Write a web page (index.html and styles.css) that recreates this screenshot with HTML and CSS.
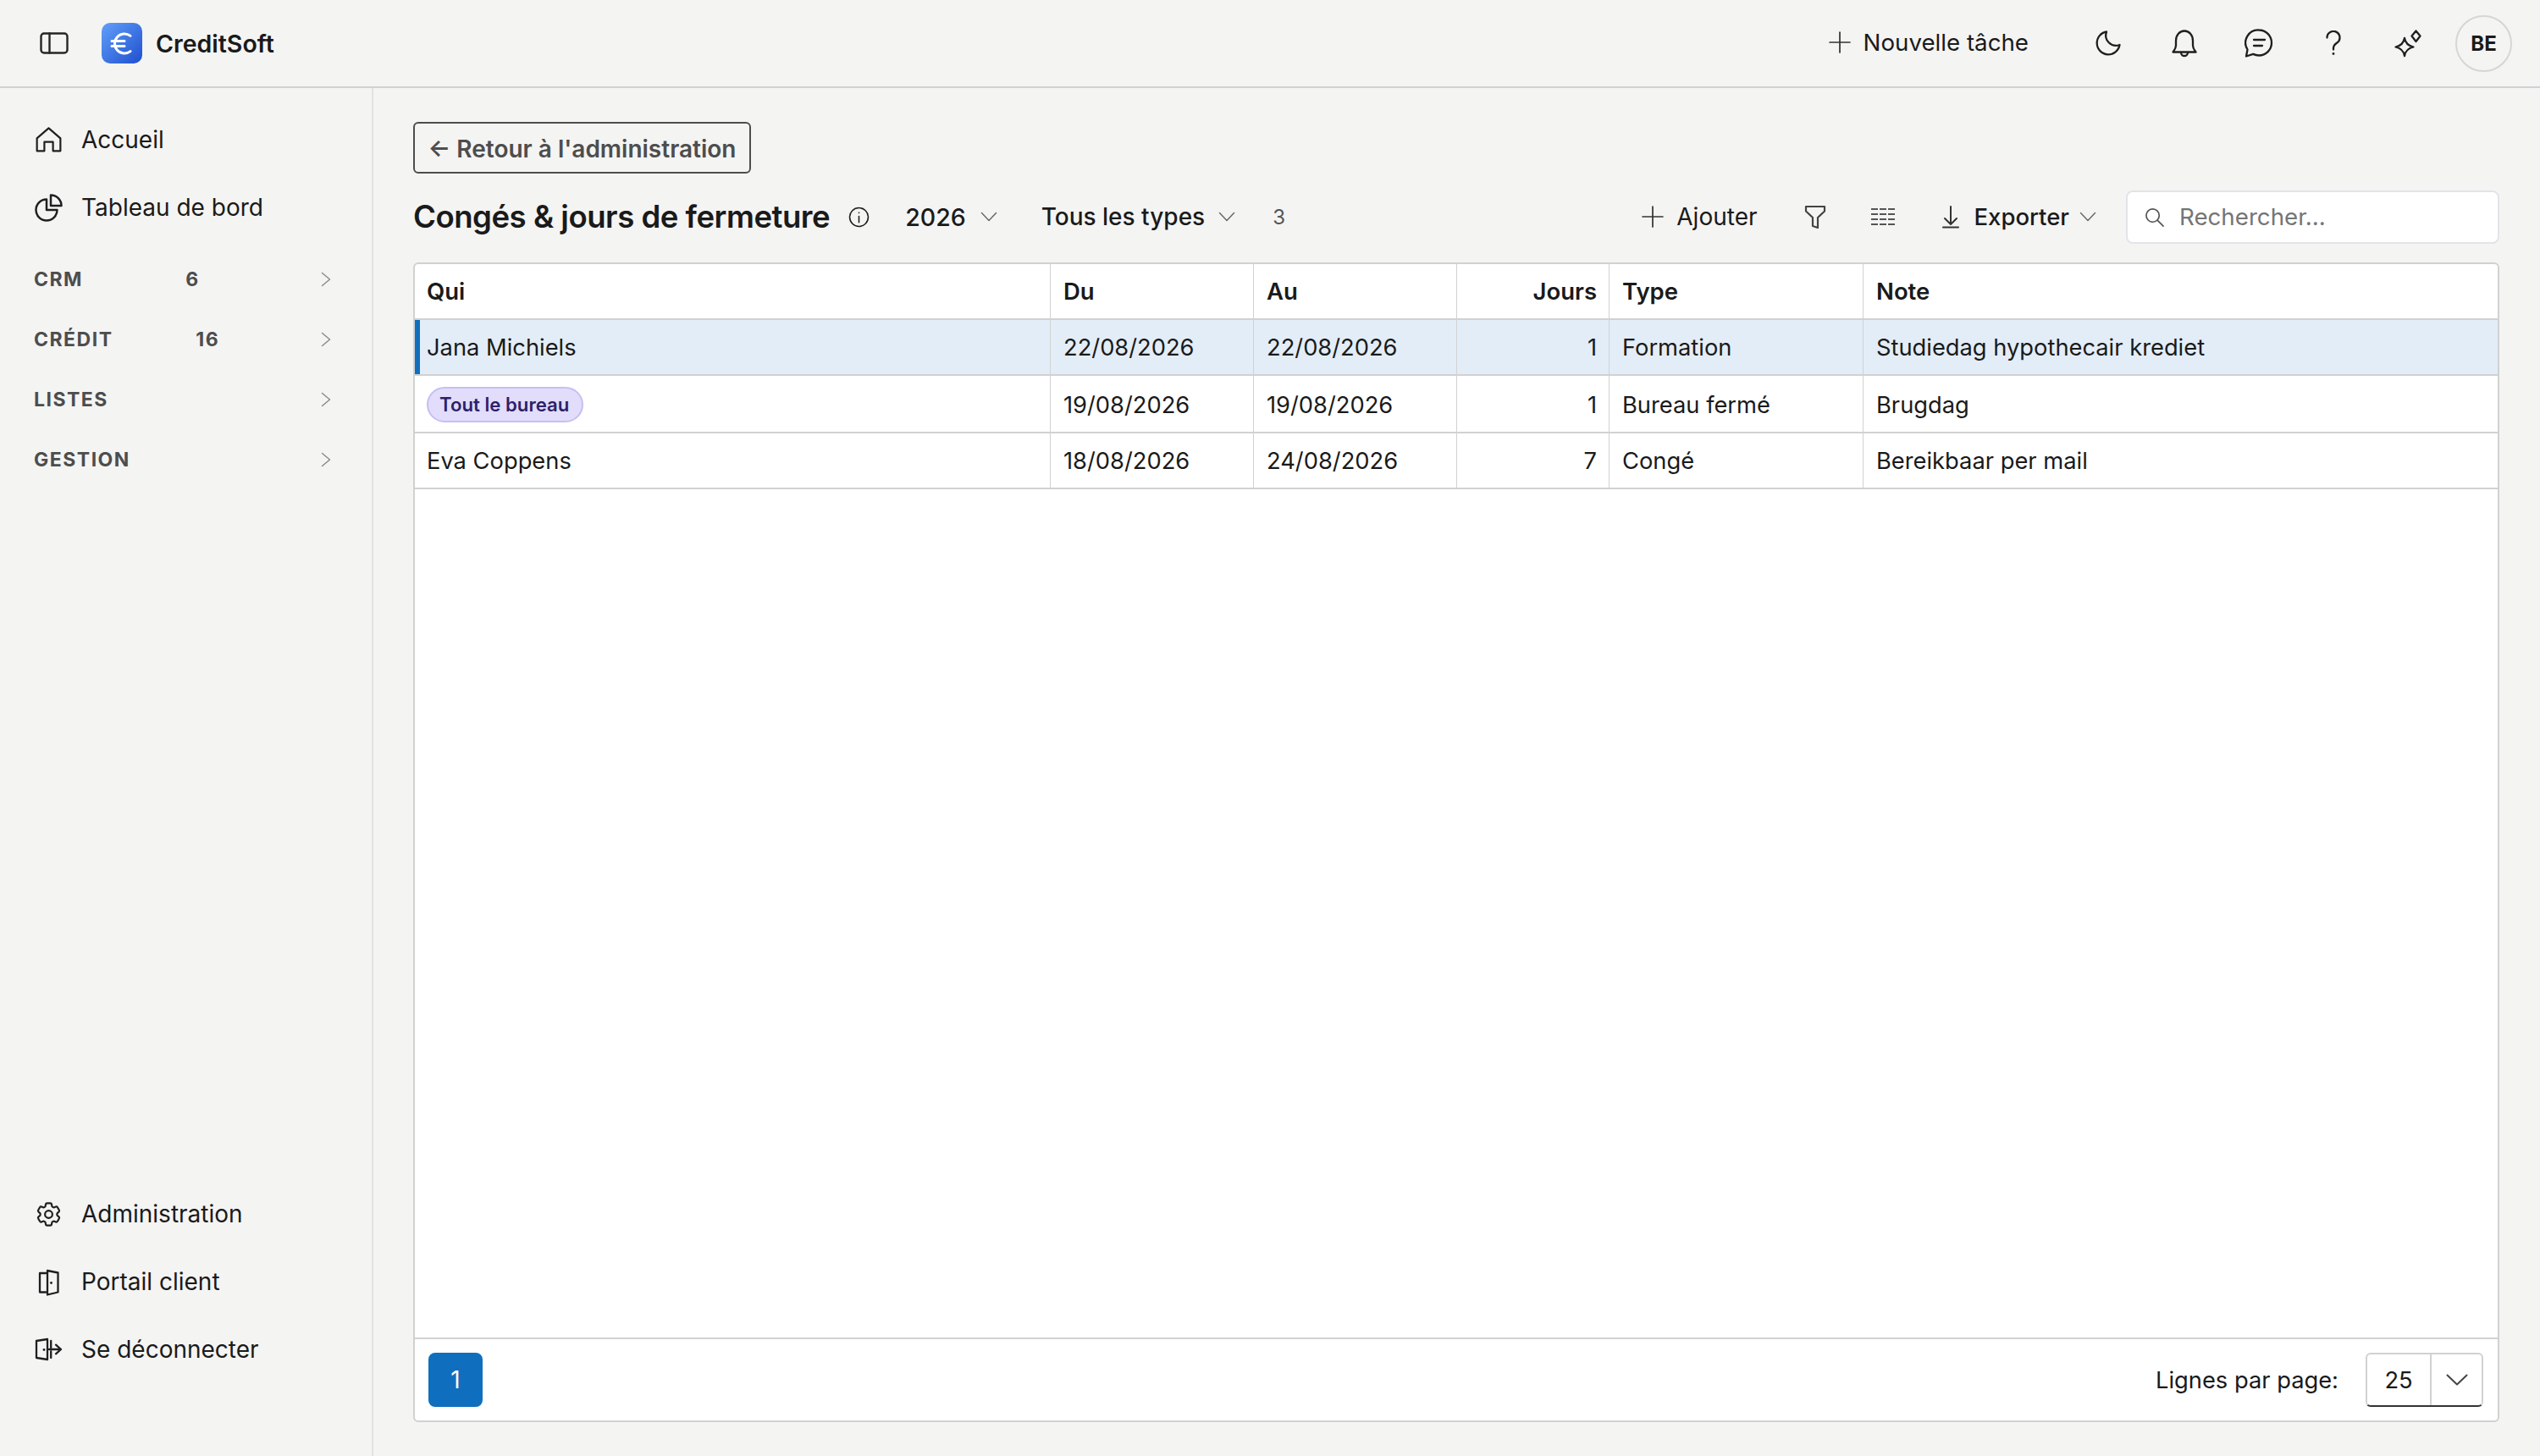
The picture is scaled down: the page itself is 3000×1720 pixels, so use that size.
FILE: index.html
```html
<!DOCTYPE html>
<html lang="fr">
<head>
    <meta charset="UTF-8">
    <title>CreditSoft</title>
    <link rel="stylesheet" href="styles.css">
</head>
<body>
    <header class="topbar">
        <div class="topbar-left">
            <svg class="icon toggle-icon" viewBox="0 0 34 26"><rect x="1.500" y="1.500" width="31" height="23" rx="3.500"/><path d="M11.500 1.500v23"/></svg>
            <div class="logo">
                <svg viewBox="0 0 48 48"><path d="M34 15.400A11.500 11.500 0 1 0 34 33.600M12 21.500h15M12 27.500h15"/></svg>
            </div>
            <span class="brand">CreditSoft</span>
        </div>
        <div class="topbar-right">
            <button class="new-task">
                <svg class="icon plus-icon" viewBox="0 0 24 24"><path d="M12 1v22M1 12h22"/></svg>
                Nouvelle tâche
            </button>
            <div class="topbar-icons">
                <span class="top-slot moon-slot"><svg class="icon moon-icon" viewBox="0 0 30 30"><path d="M13 1.500A13.500 13.500 0 1 0 28.500 17 12 12 0 0 1 13 1.500Z"/></svg></span>
                <span class="top-slot"><svg class="icon bell-icon" viewBox="0 0 30 33"><path d="M1.500 26.500c1.500-2 3.500-4 3.500-8V13a10 11.500 0 0 1 20 0v5.500c0 4 2 6 3.500 8ZM11 27a4 4 0 0 0 8 0"/></svg></span>
                <span class="top-slot"><svg class="icon chat-icon" viewBox="0 0 34 34"><path d="M17 1.500a15 15 0 0 1 0 30c-2.500 0-4.800-.6-6.800-1.600L2 32.500l1.500-8A15 15 0 0 1 17 1.500ZM11 13h13M11 20h10"/></svg></span>
                <span class="top-slot"><svg class="icon help-icon" viewBox="0 0 18 30"><path d="M1.500 8.500a7.500 7.500 0 1 1 11.500 6.300c-2.500 1.700-4 3-4 6.200v1.500"/><circle class="dot" cx="9" cy="27.500" r="1.400"/></svg></span>
                <span class="top-slot"><svg class="icon spark-icon" viewBox="0 0 34 34"><path d="M13 11c1 6 4 9 10.500 10.500C17 23 14 26 13 32c-1-6-4-9-10.500-10.500C9 20 12 17 13 11ZM26.500 2.500l5 6-5 6.500-5-6.500Z"/></svg></span>
            </div>
            <div class="avatar">BE</div>
        </div>
    </header>

    <div class="layout">
        <aside class="sidebar">
            <nav class="nav-top">
                <a class="nav-item">
                    <svg class="icon nav-icon" viewBox="0 0 24 24"><path d="M2.500 20.800V10.500L12 2.300l9.500 8.200v10.300h-6v-7.300h-7v7.300Z"/></svg>
                    Accueil
                </a>
                <a class="nav-item">
                    <svg class="icon nav-icon" viewBox="1.500 1.500 21 21"><path d="M10.500 6a7.500 7.500 0 1 0 7.500 7.500h-7.500V6Z"/><path d="M13.500 10.500H21A7.500 7.500 0 0 0 13.500 3v7.500Z"/></svg>
                    Tableau de bord
                </a>
                <div class="nav-groups">
                    <div class="nav-group">
                        <span class="group-label">CRM</span>
                        <span class="group-count">6</span>
                        <span class="group-chevron"><svg class="icon chevron-right" viewBox="0 0 12 18"><path d="M1.500 1.500 10.500 9l-9 7.500"/></svg></span>
                    </div>
                    <div class="nav-group">
                        <span class="group-label">CRÉDIT</span>
                        <span class="group-count">16</span>
                        <span class="group-chevron"><svg class="icon chevron-right" viewBox="0 0 12 18"><path d="M1.500 1.500 10.500 9l-9 7.500"/></svg></span>
                    </div>
                    <div class="nav-group">
                        <span class="group-label">LISTES</span>
                        <span class="group-chevron"><svg class="icon chevron-right" viewBox="0 0 12 18"><path d="M1.500 1.500 10.500 9l-9 7.500"/></svg></span>
                    </div>
                    <div class="nav-group">
                        <span class="group-label">GESTION</span>
                        <span class="group-chevron"><svg class="icon chevron-right" viewBox="0 0 12 18"><path d="M1.500 1.500 10.500 9l-9 7.500"/></svg></span>
                    </div>
                </div>
            </nav>
            <nav class="nav-bottom">
                <a class="nav-item">
                    <svg class="icon nav-icon" viewBox="0 0 24 24"><path d="M9.594 3.940c.09-.542.56-.94 1.110-.94h2.593c.55 0 1.020.398 1.110.94l.213 1.281c.063.374.313.686.645.870.074.040.147.083.22.127.325.196.72.257 1.075.124l1.217-.456a1.125 1.125 0 0 1 1.370.490l1.296 2.247a1.125 1.125 0 0 1-.26 1.431l-1.003.827c-.293.241-.438.613-.43.992a7.723 7.723 0 0 1 0 .255c-.008.378.137.75.43.991l1.004.827c.424.35.534.955.26 1.430l-1.298 2.247a1.125 1.125 0 0 1-1.369.491l-1.217-.456c-.355-.133-.75-.072-1.076.124a6.470 6.470 0 0 1-.22.128c-.331.183-.581.495-.644.869l-.213 1.281c-.09.543-.56.94-1.110.94h-2.594c-.55 0-1.019-.398-1.110-.94l-.213-1.281c-.062-.374-.312-.686-.644-.870a6.520 6.520 0 0 1-.22-.127c-.325-.196-.72-.257-1.076-.124l-1.217.456a1.125 1.125 0 0 1-1.369-.49l-1.297-2.247a1.125 1.125 0 0 1 .26-1.431l1.004-.827c.292-.24.437-.613.43-.991a6.932 6.932 0 0 1 0-.255c.007-.38-.138-.751-.43-.992l-1.004-.827a1.125 1.125 0 0 1-.26-1.430l1.297-2.247a1.125 1.125 0 0 1 1.370-.491l1.216.456c.356.133.751.072 1.076-.124.072-.044.146-.086.22-.128.332-.183.582-.495.644-.869l.214-1.280Z"/><circle cx="12" cy="12" r="3"/></svg>
                    Administration
                </a>
                <a class="nav-item">
                    <svg class="icon door-icon" viewBox="0 0 35 35"><path d="M14 7H7v22.500h7M16 4l12.500 2.500v23L16 32.500Z"/><circle class="dot" cx="20.500" cy="18.500" r="1.400"/></svg>
                    Portail client
                </a>
                <a class="nav-item">
                    <svg class="icon door-icon" viewBox="0 0 35 35"><path d="M16 5 3 7v20l13 2ZM20.200 7v8M20.200 19.500v7.500M18 17h14M26 11.700 32 17l-6 5.300"/><circle class="dot" cx="12" cy="17.500" r="1.400"/></svg>
                    Se déconnecter
                </a>
            </nav>
        </aside>

        <main class="content">
            <button class="back-button">← Retour à l'administration</button>

            <div class="toolbar">
                <div class="toolbar-left">
                    <h1>Congés &amp; jours de fermeture</h1>
                    <svg class="icon info-icon" viewBox="0 0 24 24"><circle cx="12" cy="12" r="10.500"/><path d="M12 11v7"/><circle class="dot" cx="12" cy="7" r=".8"/></svg>
                    <div class="select-year">2026 <svg class="icon chevron-down" viewBox="0 0 20 12"><path d="m1.500 1.500 8.500 9 8.500-9"/></svg></div>
                    <div class="select-type">Tous les types <svg class="icon chevron-down" viewBox="0 0 20 12"><path d="m1.500 1.500 8.500 9 8.500-9"/></svg></div>
                    <span class="result-count">3</span>
                </div>
                <div class="toolbar-right">
                    <div class="tool-add">
                        <svg class="icon plus-icon" viewBox="0 0 24 24"><path d="M12 1v22M1 12h22"/></svg>
                        Ajouter
                    </div>
                    <svg class="icon filter-icon" viewBox="0 0 26 28"><path d="M2 2h22v5.500L16 15v12l-6-2V15L2 7.500Z"/></svg>
                    <svg class="icon columns-icon" viewBox="0 0 28 22"><path d="M0 2h28M0 8h28M0 14h28M0 20h28"/></svg>
                    <div class="tool-export">
                        <svg class="icon export-icon" viewBox="0 0 20 27"><path d="M10 1v21M3 15l7 7 7-7M1 25.500h18"/></svg>
                        Exporter
                        <svg class="icon chevron-down" viewBox="0 0 20 12"><path d="m1.500 1.500 8.500 9 8.500-9"/></svg>
                    </div>
                    <div class="search-box">
                        <svg class="icon search-icon" viewBox="0 0 24 24"><circle cx="10" cy="10" r="8"/><path d="m16 16 7 7"/></svg>
                        <span>Rechercher...</span>
                    </div>
                </div>
            </div>

            <section class="table-card">
                <table class="data-table">
                    <colgroup>
                        <col class="col-who"><col class="col-date"><col class="col-date"><col class="col-days"><col class="col-type"><col>
                    </colgroup>
                    <thead>
                        <tr><th>Qui</th><th>Du</th><th>Au</th><th class="num">Jours</th><th>Type</th><th>Note</th></tr>
                    </thead>
                    <tbody>
                        <tr class="selected">
                            <td>Jana Michiels</td><td>22/08/2026</td><td>22/08/2026</td><td class="num">1</td><td>Formation</td><td>Studiedag hypothecair krediet</td>
                        </tr>
                        <tr class="tall">
                            <td><span class="pill">Tout le bureau</span></td><td>19/08/2026</td><td>19/08/2026</td><td class="num">1</td><td>Bureau fermé</td><td>Brugdag</td>
                        </tr>
                        <tr>
                            <td>Eva Coppens</td><td>18/08/2026</td><td>24/08/2026</td><td class="num">7</td><td>Congé</td><td>Bereikbaar per mail</td>
                        </tr>
                    </tbody>
                </table>
                <div class="table-footer">
                    <button class="page-button">1</button>
                    <div class="page-size">
                        <span>Lignes par page:</span>
                        <div class="size-select">
                            <span class="size-value">25</span>
                            <span class="size-arrow"><svg class="icon chevron-size" viewBox="0 0 26 14"><path d="m1.500 1.500 11.500 11 11.500-11"/></svg></span>
                        </div>
                    </div>
                </div>
            </section>
        </main>
    </div>
</body>
</html>
```

FILE: styles.css
```css
* {
    box-sizing: border-box;
}

body {
    margin: 0;
    height: 1720px;
    display: flex;
    flex-direction: column;
    font-family: Inter, "Liberation Sans", sans-serif;
    font-size: 27.300px;
    color: #1a1a1a;
    background-color: #f4f4f3;
}

button {
    font-family: inherit;
    color: inherit;
    background: none;
    border: none;
    padding: 0;
}

.icon {
    display: block;
    flex: none;
    fill: none;
    stroke: #1f1f1f;
    stroke-width: 2.300;
    stroke-linecap: round;
    stroke-linejoin: round;
}

.icon .dot {
    fill: #1f1f1f;
    stroke: none;
}

.topbar {
    height: 104px;
    flex: none;
    display: flex;
    align-items: center;
    justify-content: space-between;
    padding: 0 33px 0 47px;
    border-bottom: 2px solid #d1d1d1;
}

.topbar-left,
.topbar-right {
    display: flex;
    align-items: center;
}

.toggle-icon {
    width: 34px;
    height: 26px;
    margin-right: 39px;
    stroke: #262626;
    stroke-width: 2.400;
}

.logo {
    width: 48px;
    height: 48px;
    border-radius: 10px;
    background: linear-gradient(135deg, #619ff9, #1f4fcf);
    margin-right: 16px;
}

.logo svg {
    display: block;
    width: 48px;
    height: 48px;
    fill: none;
    stroke: #fff;
    stroke-width: 3;
    stroke-linecap: round;
}

.brand {
    font-size: 28.500px;
    font-weight: 600;
}

.new-task {
    display: flex;
    align-items: center;
    gap: 15px;
    font-size: 27.700px;
    margin-right: 50px;
    padding-bottom: 3px;
}

.plus-icon {
    width: 26px;
    height: 26px;
    stroke: #333;
    stroke-width: 1.600;
}

.topbar-icons {
    display: flex;
    align-items: center;
    margin-right: 12px;
}

.top-slot {
    width: 88px;
    display: flex;
    justify-content: center;
}

.moon-slot {
    margin-right: 2px;
}

.moon-icon {
    width: 30px;
    height: 30px;
}

.bell-icon {
    width: 30px;
    height: 33px;
}

.chat-icon,
.spark-icon {
    width: 34px;
    height: 34px;
}

.help-icon {
    width: 18px;
    height: 30px;
}

.avatar {
    width: 67px;
    height: 67px;
    border-radius: 50%;
    border: 2px solid #d6d6d6;
    display: flex;
    align-items: center;
    justify-content: center;
    font-size: 24px;
    font-weight: 700;
}

.layout {
    flex: 1;
    display: flex;
    min-height: 0;
}

.sidebar {
    width: 441px;
    flex: none;
    display: flex;
    flex-direction: column;
    justify-content: space-between;
    padding: 21px 0 86px 40px;
    border-right: 2px solid #e2e2e4;
}

.nav-item {
    height: 80px;
    display: flex;
    align-items: center;
    gap: 21px;
    font-size: 28px;
}

.nav-icon {
    width: 35px;
    height: 35px;
    stroke-width: 1.500;
}

.door-icon {
    width: 35px;
    height: 35px;
}

.nav-groups {
    margin-top: 9px;
}

.nav-group {
    width: 373px;
    height: 71px;
    display: flex;
    align-items: center;
    justify-content: space-between;
    font-size: 23px;
    font-weight: 700;
    letter-spacing: 1.500px;
    color: #4d4d4d;
}

.group-chevron {
    width: 56px;
    display: flex;
    justify-content: center;
}

.chevron-right {
    width: 12px;
    height: 18px;
    stroke: #8a8a8a;
    stroke-width: 1.500;
}

.content {
    flex: 1;
    min-width: 0;
    display: flex;
    flex-direction: column;
    align-items: flex-start;
    padding: 40px 48px 40px 47px;
}

.back-button {
    height: 61px;
    width: 399px;
    padding-top: 2px;
    border: 2px solid #4d4d4d;
    border-radius: 6px;
    font-size: 28px;
    font-weight: 600;
    color: #4d4d4d;
}

.toolbar {
    width: 100%;
    height: 64px;
    margin-top: 19px;
    display: flex;
    align-items: center;
    justify-content: space-between;
}

.toolbar-left,
.toolbar-right,
.select-year,
.select-type,
.tool-add,
.tool-export {
    display: flex;
    align-items: center;
}

h1 {
    margin: 0 22px 0 0;
    font-size: 36.600px;
    font-weight: 600;
    letter-spacing: -0.500px;
}

.info-icon {
    width: 25px;
    height: 25px;
    margin-right: 42px;
    stroke-width: 1.500;
}

.select-year {
    gap: 17px;
    font-weight: 500;
    font-size: 28.500px;
    margin-right: 52px;
}

.select-type {
    gap: 16px;
    font-size: 28px;
    font-weight: 500;
    margin-right: 44px;
}

.chevron-down {
    width: 20px;
    height: 12px;
    stroke: #6a6a6a;
    stroke-width: 1.500;
}

.result-count {
    font-size: 24px;
    color: #555;
}

.tool-add {
    gap: 15px;
    font-size: 28px;
    margin-right: 55px;
}

.filter-icon {
    width: 26px;
    height: 28px;
    margin-right: 53px;
    stroke: #444;
    stroke-width: 2.200;
}

.columns-icon {
    width: 28px;
    height: 22px;
    margin-right: 56px;
    stroke: #555;
    stroke-width: 2;
    stroke-linecap: butt;
    stroke-dasharray: 8 2;
}

.tool-export {
    font-size: 27.500px;
    font-weight: 500;
    margin-right: 35px;
}

.export-icon {
    width: 20px;
    height: 27px;
    margin-right: 18px;
    stroke: #333;
    stroke-width: 2;
}

.tool-export .chevron-down {
    margin-left: 12px;
}

.search-box {
    width: 441px;
    height: 63px;
    display: flex;
    align-items: center;
    gap: 18px;
    padding-left: 20px;
    background-color: #fff;
    border: 2px solid #e2e4e8;
    border-radius: 8px;
    color: #757575;
    font-size: 27.700px;
}

.search-icon {
    width: 23px;
    height: 23px;
    stroke: #555;
    stroke-width: 1.800;
}

.table-card {
    flex: 1;
    width: 100%;
    margin-top: 22px;
    display: flex;
    flex-direction: column;
    justify-content: space-between;
    background-color: #fff;
    border: 2px solid #d1d1d1;
    border-radius: 6px;
}

.data-table {
    width: 100%;
    table-layout: fixed;
    border-collapse: separate;
    border-spacing: 0;
}

.col-who {
    width: 751px;
}

.col-date {
    width: 240px;
}

.col-days {
    width: 180px;
}

.col-type {
    width: 300px;
}

.data-table th,
.data-table td {
    height: 66px;
    padding: 0 14px 0 15px;
    text-align: left;
    border-bottom: 2px solid #d1d1d1;
    border-right: 1px solid #d1d1d1;
}

.data-table th:first-child,
.data-table td:first-child {
    padding-left: 14px;
}

.data-table th:last-child,
.data-table td:last-child {
    border-right: none;
}

.data-table th {
    font-size: 27.500px;
    font-weight: 600;
}

.data-table .num {
    text-align: right;
}

.data-table .tall td {
    height: 68px;
    padding-top: 2px;
}

.selected td {
    background-color: #e3edf8;
}

.selected td:first-child {
    box-shadow: inset 6px 0 0 #106ebe;
}

.pill {
    display: inline-block;
    height: 42px;
    line-height: 38px;
    vertical-align: middle;
    padding: 0 15px 0 13px;
    border: 2px solid #c6bff3;
    border-radius: 21px;
    background-color: #e1ddfb;
    color: #2e1f6b;
    font-size: 22.200px;
    font-weight: 600;
}

.table-footer {
    height: 98px;
    display: flex;
    align-items: center;
    justify-content: space-between;
    padding: 0 17px 0 16px;
    border-top: 2px solid #d1d1d1;
}

.page-button {
    width: 64px;
    height: 64px;
    border-radius: 8px;
    background-color: #106ebe;
    color: #fff;
    font-size: 28px;
}

.page-size {
    display: flex;
    align-items: center;
    gap: 32px;
}

.size-select {
    width: 139px;
    height: 64px;
    display: flex;
    border: 2px solid #d1d1d1;
    border-bottom-color: #333;
    border-radius: 6px;
}

.size-value {
    width: 76px;
    display: flex;
    align-items: center;
    justify-content: center;
    border-right: 2px solid #d1d1d1;
}

.size-arrow {
    flex: 1;
    display: flex;
    align-items: center;
    justify-content: center;
}

.chevron-size {
    width: 26px;
    height: 14px;
    stroke: #444;
    stroke-width: 2;
}
```
